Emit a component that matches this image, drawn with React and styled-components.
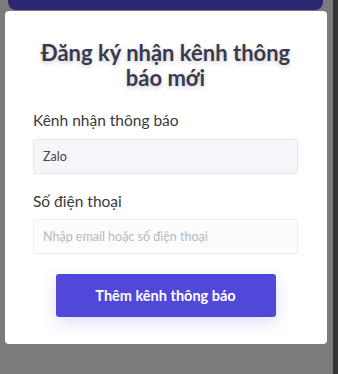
import React from "react";
import styled, { createGlobalStyle } from "styled-components";

const Global = createGlobalStyle`
  html, body { margin: 0; padding: 0; }
  body { font-family: "Lato", "Noto Sans", sans-serif; }
  * { box-sizing: border-box; }
`;

const Page = styled.div`
  display: flex;
  width: 338px;
  height: 374px;
  background: #7b7b7b;
  overflow: hidden;
`;

const Main = styled.div`
  flex: 1;
  display: flex;
  flex-direction: column;
  padding: 0 6px 0 5px;
`;

const EdgeStrip = styled.div`
  width: 5px;
  background: #363636;
`;

const Header = styled.div`
  height: 10px;
  margin: 0 4px 1px 3px;
  background: #2b2770;
  border-radius: 0 0 8px 8px;
`;

const Card = styled.div`
  height: 333px;
  background: #ffffff;
  border-radius: 4px;
  display: flex;
  flex-direction: column;
  padding: 29px 29px 0 28px;
`;

const Title = styled.h2`
  margin: 0;
  text-align: center;
  font-size: 22px;
  line-height: 25px;
  font-weight: 700;
  color: #3a3a4c;
  text-shadow: 0 2px 4px rgba(60, 60, 90, 0.25);
`;

const Label = styled.label`
  display: block;
  margin-top: ${(p) => p.$mt}px;
  font-size: 15.5px;
  line-height: 18px;
  color: #3a3a3a;
`;

const Field = styled.div`
  margin-top: ${(p) => p.$mt}px;
  height: 35px;
  display: flex;
  align-items: center;
  padding: 0 9px;
  border: 1px solid ${(p) => (p.$filled ? "#e6e6ee" : "#eeeef2")};
  border-radius: 2px;
  background: ${(p) => (p.$filled ? "#f5f5fa" : "#fcfcfd")};
  font-size: 12.5px;
  color: ${(p) => (p.$filled ? "#444444" : "#b8b8c0")};
`;

const Button = styled.button`
  align-self: center;
  margin: 20px 0 0 0;
  width: 220px;
  height: 43px;
  border: none;
  border-radius: 3px;
  background: #5147d9;
  color: #ffffff;
  font-family: "Lato", "Noto Sans", sans-serif;
  font-size: 14.5px;
  font-weight: 700;
  box-shadow: 0 6px 16px rgba(81, 71, 217, 0.18);
`;

export default function App() {
  return (
    <>
      <Global />
      <Page>
        <Main>
          <Header />
          <Card>
            <Title>
              Đăng ký nhận kênh thông
              <br />
              báo mới
            </Title>
            <Label $mt={21}>Kênh nhận thông báo</Label>
            <Field $mt={10} $filled>Zalo</Field>
            <Label $mt={18}>Số điện thoại</Label>
            <Field $mt={9}>Nhập email hoặc số điện thoại</Field>
            <Button>Thêm kênh thông báo</Button>
          </Card>
        </Main>
        <EdgeStrip />
      </Page>
    </>
  );
}
